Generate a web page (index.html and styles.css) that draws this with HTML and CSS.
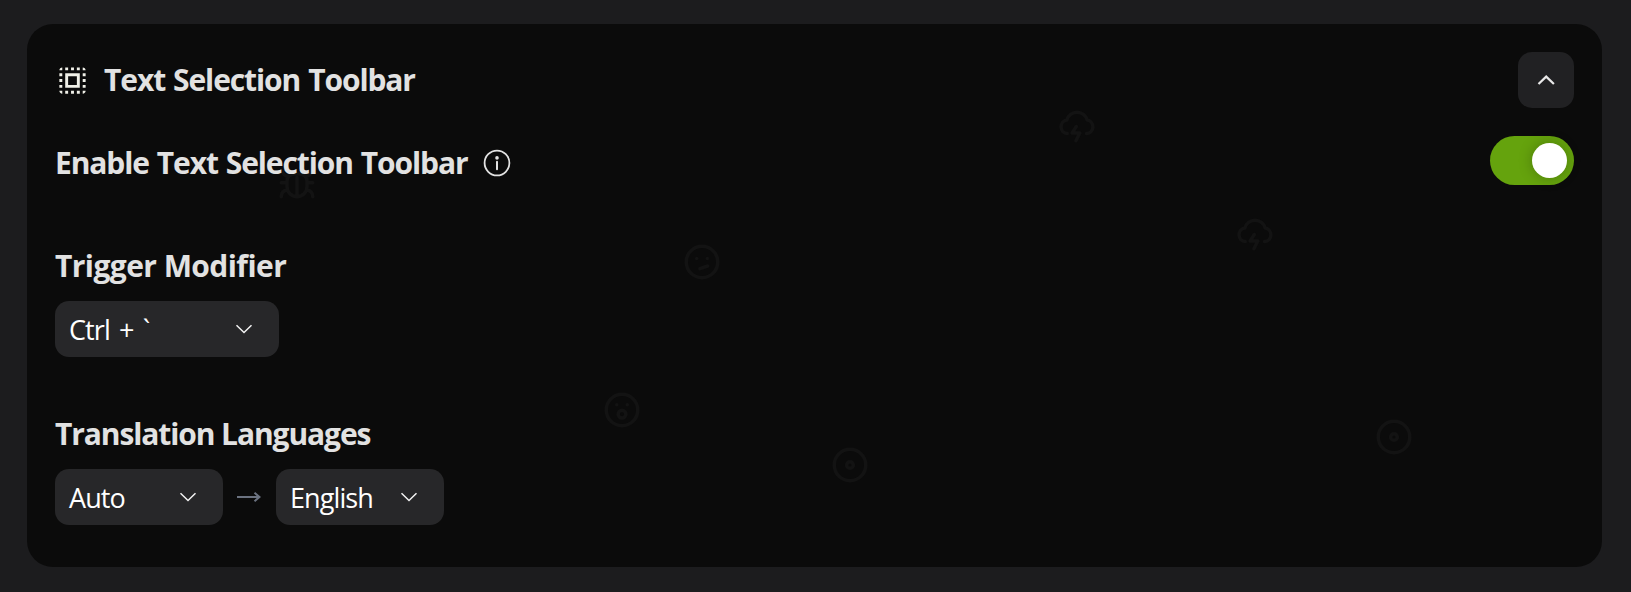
FILE: index.html
```html
<!doctype html>
<html lang="en">
  <head>
    <meta charset="UTF-8" />
    <meta name="viewport" content="width=device-width, initial-scale=1.0" />
    <title>Text Selection Toolbar</title>
    <link rel="stylesheet" href="styles.css">
  </head>
  <body>
    <!-- shapes shared by the background pattern -->
    <svg class="sprite">
      <symbol id="storm" viewBox="0 0 24 24">
        <path d="M6.4 16.9A3.88 3.88 0 0 1 6.2 9.200A6 6 0 0 1 17.8 9.200A3.88 3.88 0 0 1 17.5 16.9" />
        <path d="M11.6 12.9l-2.400 3.700h4.400l-2.200 4.400" />
      </symbol>
      <symbol id="bug" viewBox="0 0 24 24">
        <path d="M12 21a5.700 5.700 0 0 1-5.700-5.700v-3.300a4 4 0 0 1 4-4h3.400a4 4 0 0 1 4 4v3.300a5.700 5.700 0 0 1-5.700 5.700zM12 21V10M3 13h3.300M17.7 13H21M3 21c0-2.200 1.200-3.600 3.600-4M21 21c0-2.200-1.200-3.600-3.600-4M3.600 6.500c.2 1.400 1.200 2.400 3 2.900M20.400 6.500c-.2 1.400-1.200 2.400-3 2.900" />
      </symbol>
      <symbol id="confused" viewBox="0 0 24 24">
        <circle cx="12" cy="12" r="9" />
        <path d="M9 10h.01M15 10h.01M10.8 15.8l4.400-1.500" />
      </symbol>
      <symbol id="surprised" viewBox="0 0 24 24">
        <circle cx="12" cy="12" r="9" />
        <circle cx="12" cy="14.400" r="2.200" />
        <path d="M9 9h.01M15 9h.01" />
      </symbol>
      <symbol id="disc" viewBox="0 0 24 24">
        <circle cx="12" cy="12" r="9" />
        <circle cx="12" cy="12" r="1.900" />
      </symbol>
    </svg>

    <section class="card">
      <div class="pattern">
        <svg class="shape shape-bug"><use href="#bug" /></svg>
        <svg class="shape shape-confused"><use href="#confused" /></svg>
        <svg class="shape shape-surprised"><use href="#surprised" /></svg>
        <svg class="shape shape-disc-left"><use href="#disc" /></svg>
        <svg class="shape shape-disc-right"><use href="#disc" /></svg>
        <svg class="shape shape-storm-left"><use href="#storm" /></svg>
        <svg class="shape shape-storm-right"><use href="#storm" /></svg>
      </div>

      <header class="card-header">
        <svg class="title-icon" viewBox="0 0 24 24">
          <path d="M3 5h2V3c-1.100 0-2 .9-2 2zm0 8h2v-2H3v2zm4 8h2v-2H7v2zM3 9h2V7H3v2zm10-6h-2v2h2V3zm6 0v2h2c0-1.100-.9-2-2-2zM5 21v-2H3c0 1.100.9 2 2 2zm-2-4h2v-2H3v2zM9 3H7v2h2V3zm2 18h2v-2h-2v2zm8-8h2v-2h-2v2zm0 8c1.100 0 2-.9 2-2h-2v2zm0-12h2V7h-2v2zm0 8h2v-2h-2v2zm-4 4h2v-2h-2v2zm0-16h2V3h-2v2zM7 17h10V7H7v10zm2-8h6v6H9V9z" />
        </svg>
        <h2 class="heading title">Text Selection Toolbar</h2>
        <button class="collapse-btn" aria-label="Collapse">
          <svg width="18" height="10" viewBox="0 0 18 10"><path d="M1.500 9L9.200 1.600l7.700 7.400" /></svg>
        </button>
      </header>

      <div class="toggle-row">
        <h3 class="heading enable-label">Enable Text Selection Toolbar</h3>
        <svg class="info-icon" viewBox="0 0 28 28">
          <circle class="info-ring" cx="14" cy="14" r="12.400" />
          <circle cx="14" cy="8.900" r="1.800" />
          <rect x="13" y="11.700" width="2" height="9.500" rx="1" />
        </svg>
        <button class="toggle" role="switch" aria-checked="true" aria-label="Enable"><span class="knob"></span></button>
      </div>

      <div class="field field-trigger">
        <h3 class="heading trigger-label">Trigger Modifier</h3>
        <button class="select select-wide">
          <span class="shortcut">Ctrl + `</span>
          <svg class="chevron" viewBox="0 0 18 10"><path d="M1.500 1.300L9 8.500l7.500-7.200" /></svg>
        </button>
      </div>

      <div class="field">
        <h3 class="heading languages-label">Translation Languages</h3>
        <div class="languages">
          <button class="select">
            <span>Auto</span>
            <svg class="chevron" viewBox="0 0 18 10"><path d="M1.500 1.300L9 8.500l7.500-7.200" /></svg>
          </button>
          <svg class="arrow" viewBox="0 0 24 10"><path d="M0 5h22.500M17.500 .8l5 4.200-5 4.200" /></svg>
          <button class="select">
            <span>English</span>
            <svg class="chevron" viewBox="0 0 18 10"><path d="M1.500 1.300L9 8.500l7.500-7.200" /></svg>
          </button>
        </div>
      </div>
    </section>
  </body>
</html>
```
FILE: styles.css
```css
:root {
  --page: #1c1c1e;
  --card: #0b0b0b;
  --control: #272729;
  --text: #e2e2e2;
  --green: #65a30d;
}

* {
  margin: 0;
  padding: 0;
  box-sizing: border-box;
}

body {
  height: 592px;
  padding: 24px 29px 25px 27px;
  background: var(--page);
  color: var(--text);
  font-family: "Open Sans", "Noto Sans", sans-serif;
  overflow: hidden;
}

button {
  border: none;
  font-family: inherit;
  cursor: pointer;
}

.sprite {
  display: none;
}

.card {
  position: relative;
  height: 543px;
  padding: 28px;
  background: var(--card);
  border-radius: 26px;
}

.card > :not(.pattern) {
  position: relative;
}

/* faint icons scattered behind the settings */
.pattern {
  position: absolute;
  inset: 0;
}

.shape {
  position: absolute;
  width: 42px;
  height: 42px;
  fill: none;
  stroke: #131313;
  stroke-width: 2;
  stroke-linecap: round;
  stroke-linejoin: round;
}

.shape-bug { left: 249px; top: 136px; }
.shape-confused { left: 654px; top: 217px; }
.shape-surprised { left: 574px; top: 365px; }
.shape-disc-left { left: 802px; top: 420px; }
.shape-disc-right { left: 1346px; top: 392px; }
.shape-storm-left { left: 1029px; top: 80px; }
.shape-storm-right { left: 1207px; top: 188px; }

.heading {
  font-size: 30px;
  font-weight: 700;
  line-height: 42px;
  white-space: nowrap;
}

.title {
  letter-spacing: -1.1px;
  word-spacing: 1.3px;
}

.enable-label {
  padding-top: 4px;
  letter-spacing: -1.1px;
  word-spacing: 1.2px;
}

.trigger-label { letter-spacing: -0.57px; }
.languages-label { letter-spacing: -1.1px; }

.card-header {
  display: flex;
  align-items: center;
  height: 56px;
}

.title-icon {
  width: 35px;
  height: 35px;
  margin-right: 14px;
  fill: #f0f0e8;
}

.collapse-btn {
  display: flex;
  align-items: center;
  justify-content: center;
  width: 56px;
  height: 56px;
  margin-left: auto;
  border-radius: 14px;
  background: #212123;
}

.collapse-btn path {
  fill: none;
  stroke: #e8e8e8;
  stroke-width: 2.2;
}

.toggle-row {
  display: flex;
  align-items: center;
  height: 49px;
  margin-top: 28px;
}

.info-icon {
  width: 28px;
  height: 28px;
  margin: 4px 0 0 16px;
  fill: var(--text);
}

.info-ring {
  fill: none;
  stroke: var(--text);
  stroke-width: 1.8;
}

.toggle {
  display: flex;
  justify-content: flex-end;
  width: 84px;
  height: 49px;
  margin-left: auto;
  padding: 7px;
  border-radius: 25px;
  background: var(--green);
}

.knob {
  width: 35px;
  height: 35px;
  border-radius: 50%;
  background: #fff;
  box-shadow: 0 0 14px rgba(0, 0, 0, 0.25);
}

.field {
  margin-top: 56px;
}

.field-trigger {
  margin-top: 60px;
}

.field .heading {
  margin-bottom: 14px;
}

.select {
  display: flex;
  align-items: center;
  justify-content: space-between;
  width: 168px;
  height: 56px;
  padding: 0 26px 0 14px;
  border-radius: 14px;
  background: var(--control);
  color: #fff;
  font-size: 27px;
  font-weight: 450;
  letter-spacing: -0.9px;
}

.select-wide {
  width: 224px;
}

.shortcut {
  word-spacing: 3px;
}

.chevron {
  width: 18px;
  height: 10px;
  fill: none;
  stroke: #f2f2f2;
  stroke-width: 1.5;
}

.languages {
  display: flex;
  align-items: center;
}

.arrow {
  width: 24px;
  height: 10px;
  margin: 0 15px 0 14px;
  fill: none;
  stroke: #6b7280;
  stroke-width: 2;
}
```
